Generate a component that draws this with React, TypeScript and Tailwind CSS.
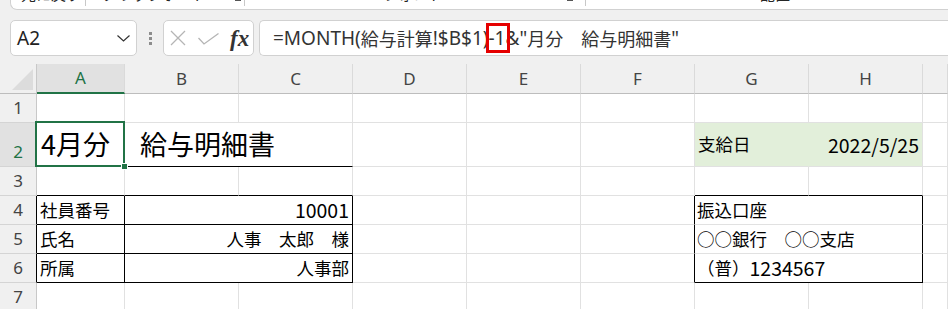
import React from "react";

const G = "border-r-[#e1e1e1] border-b-[#e1e1e1]";

function RowHead({ n, sel, blackRight }: { n: number; sel?: boolean; blackRight?: boolean }) {
  return (
    <div
      className={
        "flex flex-col justify-end border-r border-b border-b-[#d4d4d4] font-['Noto_Sans',sans-serif] text-[17px] " +
        (blackRight ? "border-r-black " : "border-r-[#c8c8c8] ") +
        (sel ? "bg-[#e1e1e1] text-[#217346]" : "bg-[#f0f0f0] text-[#444]")
      }
    >
      <span className="h-[28px] flex items-center justify-center">{n}</span>
    </div>
  );
}

function ColHead({ l, sel }: { l: string; sel?: boolean }) {
  return (
    <div
      className={
        "flex items-center justify-center border-r border-r-[#dadada] font-['Noto_Sans',sans-serif] text-[17px] " +
        (sel
          ? "bg-[#e1e1e1] text-[#217346] border-b-2 border-b-[#217346]"
          : "bg-[#f0f0f0] text-[#444] border-b border-b-[#bdbdbd]")
      }
    >
      {l}
    </div>
  );
}

function C({ className = "", children }: { className?: string; children?: React.ReactNode }) {
  return (
    <div className={"flex items-center border-r border-b bg-white whitespace-nowrap overflow-visible " + className}>
      {children}
    </div>
  );
}

const NUM = "text-[19.5px]";

export default function App() {
  return (
    <div className="w-[948px] h-[309px] overflow-hidden bg-[#f0f0f0] flex flex-col font-['Noto_Sans_CJK_JP',sans-serif] text-black">
      {/* ribbon bottom edge */}
      <div className="h-[10px] ml-[10px] bg-white border-b border-l border-[#d1d1d1] rounded-bl-[7px] overflow-hidden shrink-0">
        <div className="flex items-start mt-[-14px] text-[15px] leading-[16px] text-[#262626] whitespace-nowrap">
          <span className="ml-[10px]">元に戻す</span>
          <span className="ml-[4px] w-px h-[20px] bg-[#c8c8c8]" />
          <span className="ml-[16px]">クリップボード</span>
          <span className="ml-[28px] mt-[9px] w-[6px] h-[6px] border-r border-b border-[#555]" />
          <span className="ml-[3px] w-px h-[20px] bg-[#c8c8c8]" />
          <span className="ml-[138px]">フォント</span>
          <span className="ml-[124px] mt-[9px] w-[6px] h-[6px] border-r border-b border-[#555]" />
          <span className="ml-[12px] w-px h-[20px] bg-[#c8c8c8]" />
          <span className="ml-[174px]">配置</span>
        </div>
      </div>

      {/* formula bar */}
      <div className="mt-[10px] h-[36px] flex shrink-0">
        <div className="ml-[10px] w-[127px] bg-white border border-[#d1d1d1] rounded-[5px] flex items-center justify-between pl-[6px] pr-[6px]">
          <span className="font-['Noto_Sans',sans-serif] text-[19px] text-[#222] leading-none">A2</span>
          <svg width="13" height="7" viewBox="0 0 13 7">
            <polyline points="0.5,0.5 6.5,6 12.5,0.5" fill="none" stroke="#333" strokeWidth="1.2" />
          </svg>
        </div>
        <div className="w-[26px] flex flex-col items-center justify-center gap-[2px]">
          <span className="w-[3px] h-[3px] bg-[#8c8c8c]" />
          <span className="w-[3px] h-[3px] bg-[#8c8c8c]" />
          <span className="w-[3px] h-[3px] bg-[#8c8c8c]" />
        </div>
        <div className="w-[91px] bg-white border border-[#d1d1d1] rounded-[5px] flex items-center pl-[6px]">
          <svg width="16" height="16" viewBox="0 0 16 16">
            <path d="M1 1 L15 15 M15 1 L1 15" stroke="#b5b5b5" strokeWidth="1.3" fill="none" />
          </svg>
          <svg width="21" height="12" viewBox="0 0 21 12" className="ml-[12px] mt-[2px]">
            <polyline points="0.5,5 6,11 20.5,0.5" stroke="#b5b5b5" strokeWidth="1.3" fill="none" />
          </svg>
          <span className="ml-[11px] font-['Liberation_Serif',serif] italic font-bold text-[23px] text-[#333] leading-none">fx</span>
        </div>
        <div className="ml-[5px] flex-1 bg-white border-y border-l border-[#d1d1d1] rounded-l-[5px] flex items-center pl-[13px] text-[19px] text-[#333] whitespace-nowrap">
          <span className="font-['Noto_Sans',sans-serif]">=MONTH(</span>
          <span className="text-[18px]">給与計算</span>
          <span className="font-['Noto_Sans',sans-serif]">!$B$1)</span>
          <span className="relative font-['Noto_Sans',sans-serif]">
            -1
            <span className="absolute left-[-3px] right-[-4px] top-[-1px] bottom-[-1px] border-[3px] border-[#e50000]" />
          </span>
          <span className="font-['Noto_Sans',sans-serif]">&amp;"</span>
          <span className="text-[18px]">月分　給与明細書</span>
          <span className="font-['Noto_Sans',sans-serif]">"</span>
        </div>
      </div>

      {/* sheet grid */}
      <div className="mt-[8px] relative grid grid-cols-[37px_88px_114px_114px_114px_114px_114px_114px_114px_1fr] grid-rows-[30px_29px_44px_29px_29px_29px_29px_29px] text-[17.5px]">
        {/* header row */}
        <div className="bg-[#f0f0f0] border-r border-r-[#c8c8c8] border-b border-b-[#bdbdbd] flex items-end justify-end pr-[3px] pb-[3px]">
          <svg width="21" height="21" viewBox="0 0 21 21">
            <polygon points="21,0 21,21 0,21" fill="#dcdcdc" />
          </svg>
        </div>
        <ColHead l="A" sel />
        <ColHead l="B" />
        <ColHead l="C" />
        <ColHead l="D" />
        <ColHead l="E" />
        <ColHead l="F" />
        <ColHead l="G" />
        <ColHead l="H" />
        <ColHead l="" />

        {/* row 1 */}
        <RowHead n={1} />
        <C className={G} />
        <C className={G} />
        <C className={G} />
        <C className={G} />
        <C className={G} />
        <C className={G} />
        <C className={G} />
        <C className={G} />
        <C className={G} />

        {/* row 2 */}
        <RowHead n={2} sel />
        <C className={G + " pl-[4px] text-[27px]"}>4月分</C>
        <C className="col-span-2 border-r-[#e1e1e1] border-b-black pl-[15px] text-[27px]">給与明細書</C>
        <C className={G} />
        <C className={G} />
        <C className={G} />
        <C className="!bg-[#e2efda] border-r-[#e2efda] border-b-[#e1e1e1] pl-[3px]">支給日</C>
        <C className={"!bg-[#e2efda] border-r-[#e1e1e1] border-b-[#e1e1e1] justify-end pr-[3px] " + NUM}>2022/5/25</C>
        <C className={G} />

        {/* row 3 */}
        <RowHead n={3} />
        <C className="border-r-[#e1e1e1] border-b-black" />
        <C className="border-r-[#e1e1e1] border-b-black" />
        <C className="border-r-[#e1e1e1] border-b-black" />
        <C className={G} />
        <C className={G} />
        <C className={G} />
        <C className="border-r-[#e1e1e1] border-b-black" />
        <C className="border-r-[#e1e1e1] border-b-black" />
        <C className={G} />

        {/* row 4 */}
        <RowHead n={4} blackRight />
        <C className="border-r-black border-b-black pl-[3px]">社員番号</C>
        <C className={"col-span-2 border-r-black border-b-black justify-end pr-[3px] " + NUM}>10001</C>
        <C className={G} />
        <C className={G} />
        <C className="border-r-black border-b-[#e1e1e1]" />
        <C className="col-span-2 border-r-black border-b-[#e1e1e1] pl-[2px]">振込口座</C>
        <C className={G} />

        {/* row 5 */}
        <RowHead n={5} blackRight />
        <C className="border-r-black border-b-black pl-[3px]">氏名</C>
        <C className="col-span-2 border-r-black border-b-black justify-end pr-[3px]">人事　太郎　様</C>
        <C className={G} />
        <C className={G} />
        <C className="border-r-black border-b-[#e1e1e1]" />
        <C className="col-span-2 border-r-black border-b-[#e1e1e1] pl-[2px]">○○銀行　○○支店</C>
        <C className={G} />

        {/* row 6 */}
        <RowHead n={6} blackRight />
        <C className="border-r-black border-b-black pl-[3px]">所属</C>
        <C className="col-span-2 border-r-black border-b-black justify-end pr-[3px]">人事部</C>
        <C className={G} />
        <C className={G} />
        <C className="border-r-black border-b-[#e1e1e1]" />
        <C className="col-span-2 border-r-black border-b-black pl-[2px]">
          <span>（普）</span>
          <span className={NUM}>1234567</span>
        </C>
        <C className={G} />

        {/* row 7 */}
        <RowHead n={7} />
        <C className={G} />
        <C className={G} />
        <C className={G} />
        <C className={G} />
        <C className={G} />
        <C className={G} />
        <C className={G} />
        <C className={G} />
        <C className={G} />

        {/* selection overlay on A2 */}
        <div className="absolute left-[35px] top-[57px] w-[90px] h-[46px] border-2 border-[#217346] pointer-events-none" />
        <div className="absolute left-[121px] top-[99px] w-[7px] h-[7px] bg-[#217346] border border-white pointer-events-none" />
      </div>
    </div>
  );
}
